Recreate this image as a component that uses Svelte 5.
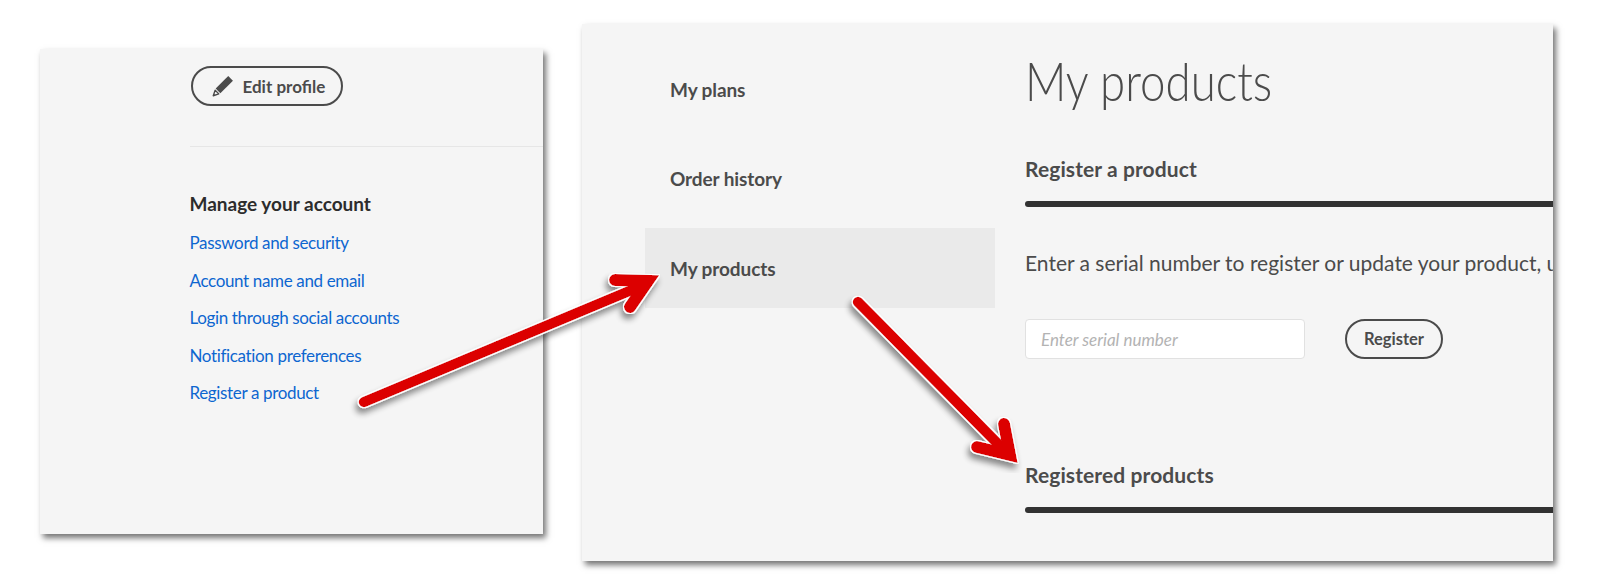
<script>
const accountLinks = [
	'Password and security',
	'Account name and email',
	'Login through social accounts',
	'Notification preferences',
	'Register a product'
];
const navItems = ['My plans', 'Order history', 'My products'];
</script>

<div class="page">
	<section class="panel account">
		<button class="pill edit">
			<svg class="pencil" viewBox="0 0 21 21" width="22" height="22" aria-hidden="true">
				<path d="M15.5 1 L20 5.5 L8 17.5 L3.5 13 Z" fill="#4b4b4b" />
				<path d="M3 14.5 L6.5 18 L1.2 19.8 Z" fill="none" stroke="#4b4b4b" stroke-width="1.3" stroke-linejoin="round" />
			</svg>
			Edit profile
		</button>
		<div class="divider"></div>
		<h3>Manage your account</h3>
		<ul>
			{#each accountLinks as link}
				<li><a href="#top">{link}</a></li>
			{/each}
		</ul>
	</section>

	<section class="panel products">
		<nav>
			{#each navItems as item, i}
				<a href="#top" class:active={i === 2}>{item}</a>
			{/each}
		</nav>
		<main>
			<h1>My products</h1>
			<h2>Register a product</h2>
			<div class="rule"></div>
			<p>Enter a serial number to register or update your product, using the form below.</p>
			<form>
				<input type="text" placeholder="Enter serial number" />
				<button type="button" class="pill register">Register</button>
			</form>
			<h2 class="second">Registered products</h2>
			<div class="rule"></div>
		</main>
	</section>

	<svg class="arrows" viewBox="0 0 1613 584" aria-hidden="true">
		<defs>
			<filter id="callout" x="-10%" y="-10%" width="120%" height="120%">
				<feMorphology in="SourceAlpha" operator="dilate" radius="1" result="grown" />
				<feGaussianBlur in="grown" stdDeviation="3" result="soft" />
				<feOffset in="soft" dx="-2" dy="5" result="moved" />
				<feComponentTransfer in="moved" result="shade">
					<feFuncA type="linear" slope="0.45" />
				</feComponentTransfer>
				<feFlood flood-color="#ffffff" />
				<feComposite in2="grown" operator="in" result="edge" />
				<feMerge>
					<feMergeNode in="shade" />
					<feMergeNode in="edge" />
					<feMergeNode in="SourceGraphic" />
				</feMerge>
			</filter>
		</defs>
		<g filter="url(#callout)" fill="none" stroke="#dc0000" stroke-linecap="round" stroke-linejoin="miter" stroke-miterlimit="10">
			<path stroke-width="10.5" d="M364 402 L646 284" />
			<path stroke-width="12" d="M615 280 L648 281 L630 307" />
			<path stroke-width="10.5" d="M858 302 L1006 452" />
			<path stroke-width="12" d="M1004 424 L1010 455 L977 447" />
		</g>
	</svg>
</div>

<style>
	:global(body) {
		background: #fff;
	}

	.page {
		position: relative;
		display: flex;
		align-items: flex-start;
		gap: 39px;
		width: 1613px;
		height: 584px;
		padding-left: 40px;
		box-sizing: border-box;
		overflow: hidden;
		font-family: Lato, 'Open Sans', sans-serif;
		color: #4b4b4b;
	}

	.panel {
		background: #f5f5f5;
		box-shadow: 3px 4px 6px rgba(0, 0, 0, 0.55);
		overflow: hidden;
		box-sizing: border-box;
	}

	.pill {
		border: 2px solid #4b4b4b;
		border-radius: 20px;
		background: transparent;
		color: #4b4b4b;
		font: 700 16.5px Lato, sans-serif;
		height: 40px;
		box-sizing: border-box;
	}

	.account {
		width: 503px;
		height: 485px;
		margin-top: 49px;
		padding: 17px 0 0 149.5px;
	}

	.edit {
		display: flex;
		align-items: center;
		gap: 9px;
		width: 152px;
		margin-left: 1px;
		padding-left: 19px;
		font-size: 17px;
	}

	.divider {
		height: 1px;
		background: #e6e6e6;
		margin-top: 40px;
		margin-right: -1px;
	}

	h3 {
		margin: 44px 0 0;
		font-size: 19px;
		line-height: 26px;
		font-weight: 700;
		color: #2c2c2c;
	}

	ul {
		list-style: none;
		margin: 14px 0 0;
		padding: 0;
		display: flex;
		flex-direction: column;
		gap: 13.5px;
	}

	li a {
		display: block;
		line-height: 24px;
		font-size: 17px;
		letter-spacing: -0.35px;
		color: #0d66d0;
		text-decoration: none;
	}

	.products {
		display: flex;
		width: 971px;
		height: 537px;
		margin-top: 24px;
		padding-left: 63px;
	}

	nav {
		width: 350px;
		flex: none;
		padding-top: 25px;
		display: flex;
		flex-direction: column;
		gap: 9.5px;
	}

	nav a {
		display: flex;
		align-items: center;
		height: 80px;
		padding-left: 25px;
		font-size: 19px;
		font-weight: 700;
		letter-spacing: -0.1px;
		color: #4b4b4b;
		text-decoration: none;
	}

	nav a.active {
		background: #eaeaea;
	}

	main {
		flex: 1;
		min-width: 0;
		margin-left: 30px;
		padding-top: 27px;
	}

	h1 {
		margin: 0;
		font-size: 54px;
		line-height: 60px;
		font-weight: 300;
		color: #4b4b4b;
		transform: scaleX(0.845);
		transform-origin: left;
	}

	h2 {
		margin: 45px 0 0;
		font-size: 21px;
		line-height: 26px;
		font-weight: 700;
		letter-spacing: 0.1px;
		color: #4b4b4b;
	}

	h2.second {
		margin-top: 102.5px;
	}

	.rule {
		height: 6px;
		margin-top: 19px;
		background: #323232;
		border-radius: 3px 0 0 3px;
	}

	p {
		margin: 43px 0 0;
		font-size: 21px;
		line-height: 26px;
		white-space: nowrap;
		color: #4b4b4b;
	}

	form {
		display: flex;
		gap: 40px;
		margin-top: 43px;
	}

	input {
		width: 280px;
		height: 40px;
		box-sizing: border-box;
		padding: 0 15px;
		background: #fff;
		border: 1px solid #e1e1e1;
		border-radius: 4px;
		font: italic 400 17px Lato, sans-serif;
	}

	input::placeholder {
		color: #b3b3b3;
		opacity: 1;
	}

	.register {
		width: 98px;
		padding: 0;
	}

	.arrows {
		position: absolute;
		inset: 0;
		width: 1613px;
		height: 584px;
		pointer-events: none;
	}
</style>
